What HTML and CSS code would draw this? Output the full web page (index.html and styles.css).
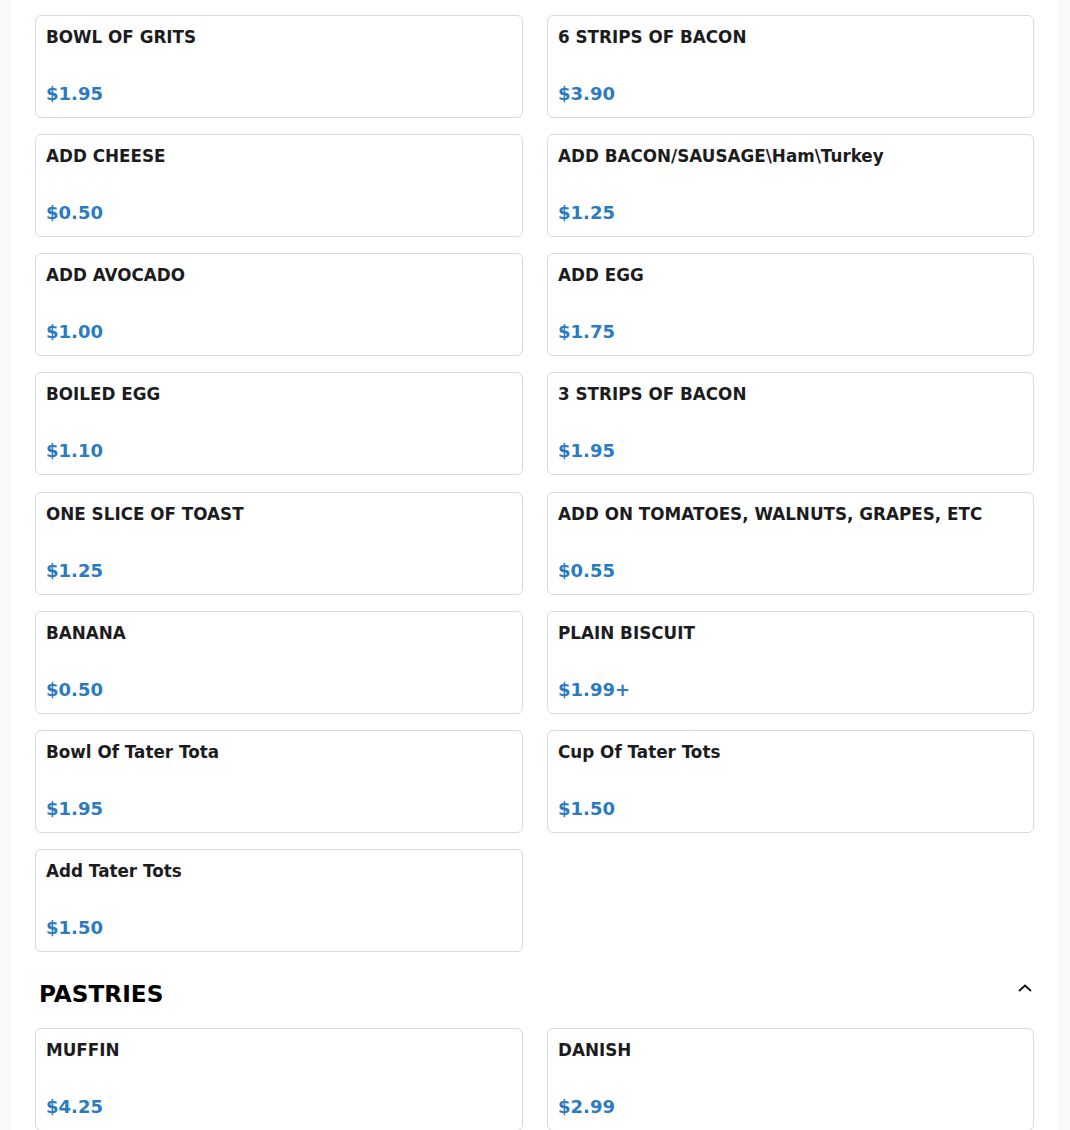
FILE: index.html
```html
<!DOCTYPE html>
<html>
<head>
<meta charset="utf-8">
<link rel="stylesheet" href="styles.css">
</head>
<body>
<div class="panel">
  <div class="grid">
    <div class="card"><div class="name">BOWL OF GRITS</div><div class="price">$1.95</div></div>
    <div class="card"><div class="name">6 STRIPS OF BACON</div><div class="price">$3.90</div></div>
    <div class="card"><div class="name">ADD CHEESE</div><div class="price">$0.50</div></div>
    <div class="card"><div class="name">ADD BACON/SAUSAGE\Ham\Turkey</div><div class="price">$1.25</div></div>
    <div class="card"><div class="name">ADD AVOCADO</div><div class="price">$1.00</div></div>
    <div class="card"><div class="name">ADD EGG</div><div class="price">$1.75</div></div>
    <div class="card"><div class="name">BOILED EGG</div><div class="price">$1.10</div></div>
    <div class="card"><div class="name">3 STRIPS OF BACON</div><div class="price">$1.95</div></div>
    <div class="card"><div class="name">ONE SLICE OF TOAST</div><div class="price">$1.25</div></div>
    <div class="card"><div class="name">ADD ON TOMATOES, WALNUTS, GRAPES, ETC</div><div class="price">$0.55</div></div>
    <div class="card"><div class="name">BANANA</div><div class="price">$0.50</div></div>
    <div class="card"><div class="name">PLAIN BISCUIT</div><div class="price">$1.99+</div></div>
    <div class="card"><div class="name">Bowl Of Tater Tota</div><div class="price">$1.95</div></div>
    <div class="card"><div class="name">Cup Of Tater Tots</div><div class="price">$1.50</div></div>
    <div class="card"><div class="name">Add Tater Tots</div><div class="price">$1.50</div></div>
  </div>
  <div class="section-head">
    <h2 class="section-title">PASTRIES</h2>
    <svg class="chevron" width="16" height="10" viewBox="0 0 16 10"><polyline points="2,8 8,2.5 14,8" fill="none" stroke="#111" stroke-width="1.8"/></svg>
  </div>
  <div class="grid">
    <div class="card"><div class="name">MUFFIN</div><div class="price">$4.25</div></div>
    <div class="card"><div class="name">DANISH</div><div class="price">$2.99</div></div>
  </div>
</div>
</body>
</html>
```
FILE: styles.css
```css
html, body {
  margin: 0;
  padding: 0;
  background: #f8f9fa;
  font-family: "DejaVu Sans", sans-serif;
  height: 1130px;
  overflow: hidden;
}
.panel {
  margin: 0 12px 0 11px;
  background: #fff;
  padding: 15px 25px 40px 24px;
  min-height: 1130px;
  box-sizing: border-box;
}
.grid {
  display: grid;
  grid-template-columns: 488px 487px;
  column-gap: 24px;
  row-gap: 16.14px;
}
.card {
  border: 1px solid #d9d9d9;
  border-radius: 6px;
  height: 103px;
  box-sizing: border-box;
  padding: 11px 10px 13px 10px;
  display: flex;
  flex-direction: column;
  justify-content: space-between;
}
.name {
  font-size: 16.8px;
  font-weight: bold;
  color: #1c1c1e;
  line-height: 21px;
}
.price {
  font-size: 18px;
  font-weight: bold;
  color: #2b7bc2;
  line-height: 21px;
}
.section-head {
  display: flex;
  align-items: center;
  justify-content: space-between;
  margin: 28px 0 20px 4px;
}
.section-title {
  margin: 0;
  font-size: 23.2px;
  line-height: 28px;
  font-weight: bold;
  color: #000;
}
.chevron {
  margin-top: -12px;
  margin-right: 0;
}
```
